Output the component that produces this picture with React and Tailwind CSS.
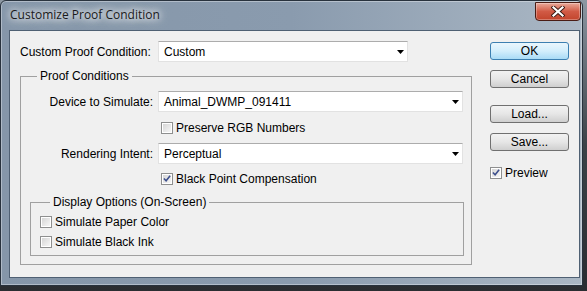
import React from 'react';

const Arrow = () => (
  <svg width="7" height="4" viewBox="0 0 7 4" className="shrink-0">
    <path d="M0 0 H7 L3.5 4 Z" fill="#000" />
  </svg>
);

const Select = ({ value, width }) => (
  <div
    className="h-[21px] flex items-center justify-between bg-white border border-[#e2e2e2] border-t-[#acacac] pl-[5px] pr-[3px]"
    style={{ width }}
  >
    <span>{value}</span>
    <Arrow />
  </div>
);

const Checkbox = ({ label, checked }) => (
  <div className="flex items-center h-[13px] gap-[3px]">
    <div className="w-[12px] h-[12px] border border-[#8e8f8f] bg-white p-px">
      <div className="w-full h-full bg-gradient-to-br from-[#d6d6d6] to-[#f6f6f6] flex items-center justify-center">
        {checked && (
          <svg width="9" height="9" viewBox="0 0 9 9">
            <path d="M1 4.5 L3.5 7 L8 1.5" fill="none" stroke="#3d4f8c" strokeWidth="1.8" />
          </svg>
        )}
      </div>
    </div>
    <span className="leading-none">{label}</span>
  </div>
);

const Button = ({ children, primary, className = '' }) => (
  <div
    className={`h-[18px] w-[79px] rounded-[3px] border flex items-center justify-center leading-none ${
      primary
        ? 'border-[#3c7fb1] bg-gradient-to-b from-[#eaf6fd] via-[#d3eefc] to-[#a9dbf6]'
        : 'border-[#707070] bg-gradient-to-b from-[#f2f2f2] via-[#e6e6e6] to-[#cfcfcf]'
    } ${className}`}
  >
    {children}
  </div>
);

const App = () => {
  return (
    <div className="w-[587px] h-[291px] bg-gradient-to-b from-[#8d98a3] via-[#3c4248] to-[#2a2d31] overflow-hidden">
      <div className="w-[583px] h-[286px] rounded-t-[6px] border border-[#28323d] bg-gradient-to-r from-[#8596a9] via-[#8a9bae] to-[#aab7c4] shadow-[inset_0_0_0_1px_rgba(255,255,255,0.35)] flex flex-col">
        {/* title bar */}
        <div className="h-[29px] flex items-start justify-between pl-[9px] pr-[1px]">
          <div
            className="mt-[6px] text-[12px] leading-[16px] text-[#1a1a1a] [text-shadow:0_0_6px_#ffffff,0_0_10px_#ffffff,0_0_16px_#ffffff]"
            style={{ fontFamily: '"Open Sans", "Noto Sans", sans-serif' }}
          >
            Customize Proof Condition
          </div>
          <div className="mt-[1px] w-[46px] h-[19px] rounded-b-[4px] border border-[#4a1c14] bg-gradient-to-b from-[#e9a99a] via-[#d15a45] to-[#c2442c] shadow-[inset_0_0_0_1px_rgba(255,255,255,0.3)] flex items-center justify-center">
            <svg width="14" height="11" viewBox="0 0 14 11">
              <path d="M2.5 1.5 L11.5 9.5 M11.5 1.5 L2.5 9.5" stroke="#3a1a14" strokeWidth="4" strokeLinecap="square" />
              <path d="M2.5 1.5 L11.5 9.5 M11.5 1.5 L2.5 9.5" stroke="#ffffff" strokeWidth="2.2" strokeLinecap="square" />
            </svg>
          </div>
        </div>

        {/* client */}
        <div
          className="ml-[8px] mr-[2px] h-[248px] bg-[#f0f0f0] border border-[#4f6073] flex pl-[10px] pt-[10px] text-[12px] text-black"
          style={{ fontFamily: '"Liberation Sans", Arial, sans-serif' }}
        >
          <div className="w-[452px] flex flex-col">
            <div className="flex items-center h-[21px]">
              <span className="w-[138px]">Custom Proof Condition:</span>
              <Select value="Custom" width={250} />
            </div>

            <fieldset className="mt-[7px] border border-[#a0a0a0] pb-[8px]">
              <legend className="ml-[16px] px-[3px] leading-[14px]">Proof Conditions</legend>
              <div className="flex items-center mt-[8px]">
                <span className="w-[132px] text-right mr-[5px]">Device to Simulate:</span>
                <Select value="Animal_DWMP_091411" width={305} />
              </div>
              <div className="ml-[140px] mt-[9px]">
                <Checkbox label="Preserve RGB Numbers" />
              </div>
              <div className="flex items-center mt-[9px]">
                <span className="w-[132px] text-right mr-[5px]">Rendering Intent:</span>
                <Select value="Perceptual" width={305} />
              </div>
              <div className="ml-[140px] mt-[8px]">
                <Checkbox label="Black Point Compensation" checked />
              </div>

              <fieldset className="ml-[9px] w-[434px] mt-[10px] border border-[#a0a0a0] pl-[9px] pb-[7px]">
                <legend className="ml-[10px] px-[3px] leading-[14px]">Display Options (On-Screen)</legend>
                <div className="mt-[6px]">
                  <Checkbox label="Simulate Paper Color" />
                </div>
                <div className="mt-[7px]">
                  <Checkbox label="Simulate Black Ink" />
                </div>
              </fieldset>
            </fieldset>
          </div>

          <div className="ml-[18px] flex flex-col">
            <Button primary className="mt-[1px]">OK</Button>
            <Button className="mt-[10px]">Cancel</Button>
            <Button className="mt-[17px]">Load...</Button>
            <Button className="mt-[10px]">Save...</Button>
            <div className="mt-[15px]">
              <Checkbox label="Preview" checked />
            </div>
          </div>
        </div>
      </div>
    </div>
  );
};

export default App;
